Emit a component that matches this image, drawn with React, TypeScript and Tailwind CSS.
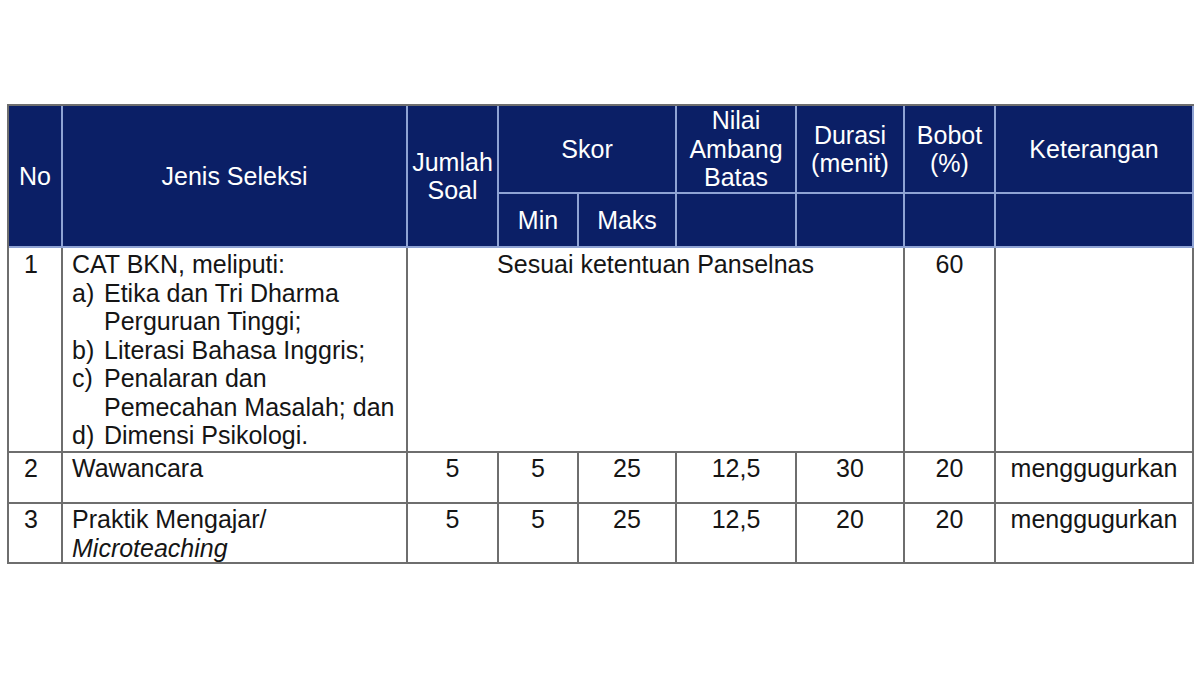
const font = { fontFamily: '"Liberation Sans", Arial, sans-serif' };

const head = 'border-r-2 border-b-2 border-[#8fa3d4] bg-[#0b1f66] text-center align-middle font-normal text-white';
const cell = 'border-r-2 border-b-2 border-[#6e6e6e] align-top text-center';

const items = [
  ['a)', 'Etika dan Tri Dharma Perguruan Tinggi;'],
  ['b)', 'Literasi Bahasa Inggris;'],
  ['c)', 'Penalaran dan Pemecahan Masalah; dan'],
  ['d)', 'Dimensi Psikologi.'],
];

export default function App() {
  return (
    <div className="min-h-[675px] w-[1200px] bg-white pl-[7px] pt-[104px]" style={font}>
      <table className="table-fixed border-separate border-spacing-0 border-l-2 border-t-2 border-[#6e6e6e] text-[25px] leading-[28.5px] text-[#151515]">
        <colgroup>
          <col className="w-[54px]" />
          <col className="w-[345px]" />
          <col className="w-[91px]" />
          <col className="w-[80px]" />
          <col className="w-[98px]" />
          <col className="w-[120px]" />
          <col className="w-[108px]" />
          <col className="w-[91px]" />
          <col className="w-[198px]" />
        </colgroup>
        <thead>
          <tr className="h-[88px]">
            <th rowSpan={2} className={head}>No</th>
            <th rowSpan={2} className={head}>Jenis Seleksi</th>
            <th rowSpan={2} className={head}>
              Jumlah
              <br />
              Soal
            </th>
            <th colSpan={2} className={head}>Skor</th>
            <th className={head}>
              Nilai
              <br />
              Ambang
              <br />
              Batas
            </th>
            <th className={head}>
              Durasi
              <br />
              (menit)
            </th>
            <th className={head}>
              Bobot
              <br />
              (%)
            </th>
            <th className={head}>Keterangan</th>
          </tr>
          <tr className="h-[54px]">
            <th className={head}>Min</th>
            <th className={head}>Maks</th>
            <th className={head}></th>
            <th className={head}></th>
            <th className={head}></th>
            <th className={head}></th>
          </tr>
        </thead>
        <tbody>
          <tr className="h-[205px]">
            <td className={`${cell} pl-[15px] pt-[2px] text-left`}>1</td>
            <td className={`${cell} pl-[9px] pr-1 pt-[2px] text-left`}>
              <div>CAT BKN, meliputi:</div>
              {items.map(([k, v]) => (
                <div key={k} className="flex">
                  <span className="w-[32px] shrink-0">{k}</span>
                  <span>{v}</span>
                </div>
              ))}
            </td>
            <td colSpan={5} className={`${cell} pt-[2px]`}>Sesuai ketentuan Panselnas</td>
            <td className={`${cell} pt-[2px]`}>60</td>
            <td className={cell}></td>
          </tr>
          <tr className="h-[51px]">
            <td className={`${cell} pl-[15px] pt-[1px] text-left`}>2</td>
            <td className={`${cell} pl-[9px] pt-[1px] text-left`}>Wawancara</td>
            <td className={`${cell} pt-[1px]`}>5</td>
            <td className={`${cell} pt-[1px]`}>5</td>
            <td className={`${cell} pt-[1px]`}>25</td>
            <td className={`${cell} pt-[1px]`}>12,5</td>
            <td className={`${cell} pt-[1px]`}>30</td>
            <td className={`${cell} pt-[1px]`}>20</td>
            <td className={`${cell} pt-[1px]`}>menggugurkan</td>
          </tr>
          <tr className="h-[60px]">
            <td className={`${cell} pl-[15px] pt-[1px] text-left`}>3</td>
            <td className={`${cell} pl-[9px] pt-[1px] text-left`}>
              Praktik Mengajar/
              <br />
              <i>Microteaching</i>
            </td>
            <td className={`${cell} pt-[1px]`}>5</td>
            <td className={`${cell} pt-[1px]`}>5</td>
            <td className={`${cell} pt-[1px]`}>25</td>
            <td className={`${cell} pt-[1px]`}>12,5</td>
            <td className={`${cell} pt-[1px]`}>20</td>
            <td className={`${cell} pt-[1px]`}>20</td>
            <td className={`${cell} pt-[1px]`}>menggugurkan</td>
          </tr>
        </tbody>
      </table>
    </div>
  );
}
